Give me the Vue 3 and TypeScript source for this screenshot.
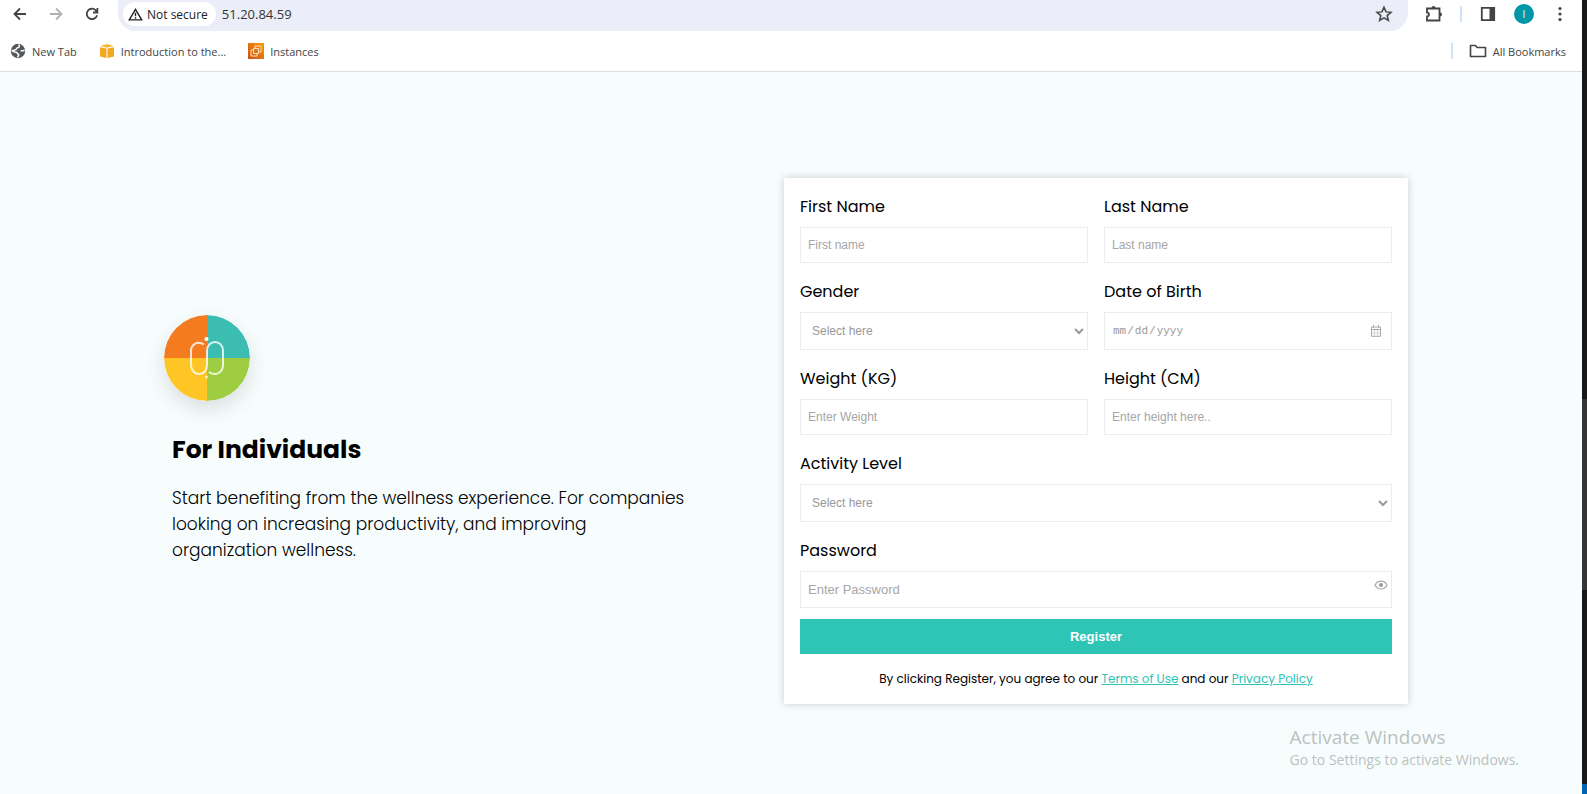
<script setup lang="ts">
import { reactive, ref } from 'vue'

type FieldKind = 'text' | 'select' | 'date' | 'password'

interface Field {
  id: string
  label: string
  kind: FieldKind
  placeholder: string
  wide?: boolean
  options?: string[]
}

const fields: Field[] = [
  { id: 'firstName', label: 'First Name', kind: 'text', placeholder: 'First name' },
  { id: 'lastName', label: 'Last Name', kind: 'text', placeholder: 'Last name' },
  { id: 'gender', label: 'Gender', kind: 'select', placeholder: 'Select here', options: ['Male', 'Female'] },
  { id: 'birthDate', label: 'Date of Birth', kind: 'date', placeholder: '' },
  { id: 'weight', label: 'Weight (KG)', kind: 'text', placeholder: 'Enter Weight' },
  { id: 'height', label: 'Height (CM)', kind: 'text', placeholder: 'Enter height here..' },
  { id: 'activity', label: 'Activity Level', kind: 'select', placeholder: 'Select here', wide: true, options: ['Low', 'Moderate', 'High'] },
  { id: 'password', label: 'Password', kind: 'password', placeholder: 'Enter Password', wide: true },
]

const form = reactive<Record<string, string>>(
  Object.fromEntries(fields.map((f) => [f.id, ''])),
)
const address = ref('51.20.84.59')
const showPassword = ref(false)
</script>

<template>
  <div class="screen">
    <div class="browser">
      <header class="chrome">
        <div class="toolbar">
          <button class="nav-btn" type="button" aria-label="Back">
            <svg viewBox="0 0 16 16" width="16" height="16"><path d="M14 8H3M8 2.5 2.5 8 8 13.5" /></svg>
          </button>
          <button class="nav-btn faded" type="button" aria-label="Forward">
            <svg viewBox="0 0 16 16" width="16" height="16"><path d="M2 8h11M8 2.5 13.5 8 8 13.5" /></svg>
          </button>
          <button class="nav-btn" type="button" aria-label="Reload">
            <svg viewBox="0 0 16 16" width="16" height="16"><path d="M13 9.2A5.2 5.2 0 1 1 11.6 4.2L13.2 6M13.4 2v4.5H9" /></svg>
          </button>
          <div class="omnibox">
            <button class="security" type="button">
              <svg viewBox="0 0 16 14" width="15" height="13"><path d="M8 1.5 1.3 12.8h13.4zM8 5.2v3.6M8 10v1.5" /></svg>
              <span>Not secure</span>
            </button>
            <input v-model="address" class="address" type="text" aria-label="Address" />
            <button class="nav-btn" type="button" aria-label="Bookmark this page">
              <svg viewBox="0 0 18 18" width="18" height="18"><path class="star" d="m9 2.2 2 4.7 5 .4-3.8 3.3 1.2 4.9L9 12.900l-4.400 2.600 1.200-4.900L2 7.300l5-.4z" /></svg>
            </button>
          </div>
          <button class="nav-btn" type="button" aria-label="Extensions">
            <svg viewBox="0 0 18 18" width="18" height="18">
              <path d="M2 3.500h12.500v12H2v-4c2.600-.3 2.600-3.700 0-4z" />
              <path class="solid" d="M6.500 3a2 2 0 0 1 4 0zM15 7.500a2 2 0 0 1 0 4z" />
            </svg>
          </button>
          <span class="separator"></span>
          <button class="nav-btn" type="button" aria-label="Side panel">
            <svg viewBox="0 0 16 16" width="16" height="16"><path d="M1.800 1.800h12.400v12.400H1.800z" /><path class="solid" d="M9.500 1.500h5v13h-5z" /></svg>
          </button>
          <button class="avatar" type="button" aria-label="Profile">I</button>
          <button class="nav-btn" type="button" aria-label="Menu">
            <svg viewBox="0 0 16 16" width="16" height="16">
              <circle class="solid" cx="8" cy="2.500" r="1.600" /><circle class="solid" cx="8" cy="8" r="1.600" /><circle class="solid" cx="8" cy="13.500" r="1.600" />
            </svg>
          </button>
        </div>
        <nav class="bookmarks" aria-label="Bookmarks">
          <a href="#">
            <svg viewBox="0 0 16 16" width="16" height="16">
              <circle cx="8" cy="8" r="7.200" fill="#54575b" />
              <path d="M8.500 1.500c1.800 1.500.6 3-.8 3.200-1.600.2-.8 1.800-2.200 2-1.200.2-1.400 1.300-3.800.8 1 .8 2.800 1.800 4.300 1.800 1.600 0 1.200 2 2.700 2 .4 1-.8 1.500-1 3M14.600 7.500c-1.600-.3-2.600.8-4 .2" fill="none" stroke="#fff" stroke-width="1.500" />
            </svg>
            New Tab
          </a>
          <a href="#">
            <svg viewBox="0 0 16 16" width="16" height="16">
              <path d="M1 4.300 7.500 5.600V15L1 13.600zM15 4.300 8.500 5.600V15l6.500-1.400z" fill="#f2a922" />
              <path d="M8 1 14.500 3 8 4.700 1.500 3z" fill="#f7b732" />
            </svg>
            Introduction to the...
          </a>
          <a href="#">
            <svg viewBox="0 0 16 16" width="16" height="16">
              <defs><linearGradient id="tile" x1="0" y1="1" x2="1" y2="0"><stop stop-color="#c8511b" /><stop offset="1" stop-color="#f90" /></linearGradient></defs>
              <path d="M0 0h16v16H0z" fill="url(#tile)" />
              <path d="M5.500 5.500h5v5h-5zM7 5V3h6v6h-2M5 7H3v6h6v-2" fill="none" stroke="#fde3c4" />
            </svg>
            Instances
          </a>
          <span class="separator push"></span>
          <a href="#">
            <svg viewBox="0 0 18 14" width="18" height="14"><path d="M1.500 12.500v-11h5l1.600 2h8.400v9z" fill="none" stroke="#444" stroke-width="1.600" stroke-linejoin="round" /></svg>
            All Bookmarks
          </a>
        </nav>
      </header>

      <main class="page">
        <section class="intro">
          <svg class="logo" viewBox="0 0 86 86" role="img" aria-label="Logo">
            <path d="M43 43V0A43 43 0 0 0 0 43z" fill="#f47b20" />
            <path d="M43 43h43A43 43 0 0 0 43 0z" fill="#3cbdb1" />
            <path d="M43 43H0a43 43 0 0 0 43 43z" fill="#ffc524" />
            <path d="M43 43v43a43 43 0 0 0 43-43z" fill="#9fcd42" />
            <g fill="none" stroke="#fff" stroke-opacity=".8" stroke-width="2">
              <path d="M40 29.500C33 25 27 30 27 36v14c0 12 16 12 16 0V36c0-12 16-12 16 0v14c0 7-7 12-14 7" />
            </g>
            <circle cx="42.500" cy="24" r="2" fill="#fff" />
            <circle cx="42.500" cy="62" r="1.600" fill="#fff" fill-opacity=".7" />
          </svg>
          <h1>For Individuals</h1>
          <p>Start benefiting from the wellness experience. For companies looking on increasing productivity, and improving organization wellness.</p>
        </section>

        <form class="card" @submit.prevent>
          <div class="fields">
            <div v-for="f in fields" :key="f.id" class="field" :class="{ wide: f.wide }">
              <label :for="f.id">{{ f.label }}</label>
              <select v-if="f.kind === 'select'" :id="f.id" v-model="form[f.id]">
                <option value="">{{ f.placeholder }}</option>
                <option v-for="o in f.options" :key="o" :value="o">{{ o }}</option>
              </select>
              <div v-else-if="f.kind === 'date'" class="control">
                <input :id="f.id" v-model="form[f.id]" type="date" />
                <svg class="calendar" viewBox="0 0 12 12" width="12" height="12">
                  <path d="M1.500 2h9v9.300h-9zM1.500 4.500h9M3.500 0v3M8.500 0v3" />
                  <path class="faint" d="M4.500 5v6M7.500 5v6M2 8h8" />
                </svg>
              </div>
              <div v-else-if="f.kind === 'password'" class="control">
                <input
                  :id="f.id"
                  v-model="form[f.id]"
                  class="password"
                  :type="showPassword ? 'text' : 'password'"
                  :placeholder="f.placeholder"
                />
                <button class="eye" type="button" aria-label="Show password" @click="showPassword = !showPassword">
                  <svg viewBox="0 0 14 10" width="14" height="10">
                    <path d="M1 5c2.500-5.300 9.500-5.300 12 0-2.500 5.300-9.500 5.300-12 0z" fill="none" stroke="#aaa" stroke-width="1.200" />
                    <circle cx="7" cy="5" r="2" fill="#999" />
                  </svg>
                </button>
              </div>
              <input v-else :id="f.id" v-model="form[f.id]" type="text" :placeholder="f.placeholder" />
            </div>
          </div>
          <button class="register" type="submit">Register</button>
          <p class="terms">
            By clicking Register, you agree to our <a href="#">Terms of Use</a> and our <a href="#">Privacy Policy</a>
          </p>
        </form>
      </main>
    </div>

    <div class="edge" aria-hidden="true">
      <span class="edge-thumb"></span>
      <span class="edge-foot"></span>
    </div>

    <aside class="watermark">
      <strong>Activate Windows</strong>
      <span>Go to Settings to activate Windows.</span>
    </aside>
  </div>
</template>

<style>
body {
  margin: 0;
}
</style>

<style scoped>
* {
  box-sizing: border-box;
}

.screen {
  position: relative;
  display: flex;
  min-height: 100vh;
  background: #f7fdfd;
  color: #000;
  font-family: Poppins, Inter, "Liberation Sans", sans-serif;
}

.browser {
  display: flex;
  flex: 1;
  flex-direction: column;
  min-width: 0;
}

.chrome {
  background: #fff;
  border-bottom: 1px solid #dcdfdf;
  color: #444;
  font-family: "Segoe UI", "Open Sans", sans-serif;
  font-size: 12px;
}

button {
  border: 0;
  padding: 0;
  background: none;
  font-family: inherit;
}

.toolbar {
  display: flex;
  align-items: flex-start;
  gap: 12px;
  padding: 0 10px 0 8px;
}

.nav-btn {
  display: grid;
  place-items: center;
  flex: none;
  width: 24px;
  height: 28px;
}

.nav-btn svg {
  fill: none;
  stroke: #444;
  stroke-width: 1.8;
}

.nav-btn svg .solid {
  fill: #444;
  stroke: none;
}

.nav-btn .star {
  stroke-width: 1.5;
}

.faded svg {
  stroke: #b0b0b0;
}

.omnibox {
  display: flex;
  flex: 1;
  align-items: flex-start;
  gap: 6px;
  height: 31px;
  margin: 0 2px;
  padding: 0 12px 0 5px;
  border-radius: 0 0 18px 18px;
  background: #ebeef8;
}

.security {
  display: flex;
  align-items: center;
  gap: 4px;
  height: 24px;
  margin-top: 2px;
  padding: 0 8px 0 5px;
  border-radius: 12px;
  background: #fff;
  color: #222;
  font-size: 12px;
  font-weight: 500;
  white-space: nowrap;
}

.security svg {
  fill: none;
  stroke: #222;
  stroke-width: 1.5;
}

.address {
  flex: 1;
  min-width: 0;
  height: 28px;
  padding: 0;
  border: 0;
  background: none;
  color: #333;
  font-family: inherit;
  font-size: 13px;
}

.separator {
  align-self: center;
  width: 2px;
  height: 16px;
  background: #d0e1fb;
}

.toolbar .separator {
  margin: 6px 2px 0;
  align-self: flex-start;
}

.avatar {
  width: 20px;
  height: 20px;
  margin: 4px 2px 0;
  border-radius: 50%;
  background: #0097a7;
  color: #fff;
  font-size: 10px;
}

.bookmarks {
  display: flex;
  align-items: center;
  gap: 22px;
  height: 40px;
  padding: 0 16px 0 10px;
  font-size: 11px;
}

.bookmarks a {
  display: flex;
  align-items: center;
  gap: 6px;
  color: #444;
  text-decoration: none;
  white-space: nowrap;
}

.push {
  margin: 0 -6px 0 auto;
}

.page {
  display: grid;
  flex: 1;
  grid-template-columns: 51fr 52fr;
  align-items: center;
  padding: 16px 174px 0 172px;
}

.intro {
  padding: 0 96px 4px 0;
}

.logo {
  display: block;
  width: 86px;
  height: 86px;
  margin-left: -8px;
  border-radius: 50%;
  box-shadow: 0 8px 20px rgba(0, 0, 0, 0.12);
}

h1 {
  margin: 32px 0 18px;
  font-size: 25px;
  font-weight: 700;
  line-height: 34px;
}

.intro p {
  margin: 0;
  font-size: 17px;
  font-weight: 300;
  line-height: 26px;
}

.card {
  padding: 16px;
  background: #fff;
  box-shadow: 0 0 8px rgba(0, 0, 0, 0.18);
}

.fields {
  display: grid;
  grid-template-columns: 1fr 1fr;
  gap: 16px;
}

.field {
  display: flex;
  flex-direction: column;
  gap: 7px;
}

.wide {
  grid-column: 1 / -1;
}

label {
  font-size: 16px;
  line-height: 26px;
}

.field input,
.field select {
  width: 100%;
  height: 36px;
  padding: 0 7px;
  border: 1px solid #ececec;
  border-radius: 0;
  outline: none;
  background: #fff;
  color: #999;
  font-family: "Liberation Sans", Arial, sans-serif;
  font-size: 12px;
}

.field input::placeholder {
  color: #a6a6a6;
}

.field select,
.field input[type="date"] {
  height: 38px;
}

.field select {
  padding: 0 5px 0 7px;
}

.field input[type="date"] {
  font-family: "Liberation Mono", monospace;
  font-size: 11px;
}

.field input[type="date"]::-webkit-calendar-picker-indicator {
  opacity: 0;
}

.field .password {
  height: 37px;
  font-size: 13px;
}

.control {
  position: relative;
  display: flex;
}

.calendar {
  position: absolute;
  top: 13px;
  right: 10px;
  fill: none;
  stroke: #aaa;
  pointer-events: none;
}

.calendar .faint {
  stroke: #d4d4d4;
}

.eye {
  position: absolute;
  top: 9px;
  right: 4px;
  display: grid;
}

.register {
  display: block;
  width: 100%;
  height: 35px;
  margin-top: 11px;
  background: #2ec4b6;
  color: #fff;
  font-family: "Liberation Sans", Arial, sans-serif;
  font-size: 13px;
  font-weight: 700;
}

.terms {
  margin: 16px 0 0;
  font-size: 12px;
  line-height: 18px;
  text-align: center;
}

.terms a {
  color: #2ec4b6;
}

.edge {
  display: flex;
  flex-direction: column;
  width: 5px;
  background: #181818;
}

.edge-thumb {
  height: 24%;
  margin-top: auto;
  background: #353535;
}

.edge-foot {
  flex: 0 0 10px;
  margin-top: 194px;
  background: #0063b1;
}

.watermark {
  position: absolute;
  right: 68px;
  bottom: 24px;
  display: flex;
  flex-direction: column;
  color: #bcc1c1;
  font-family: "Segoe UI", "Open Sans", sans-serif;
  font-size: 14px;
  line-height: 20px;
  pointer-events: none;
}

.watermark strong {
  font-size: 19px;
  font-weight: 400;
  line-height: 26px;
}
</style>
